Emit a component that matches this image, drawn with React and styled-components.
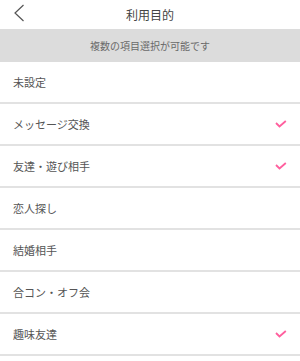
import React, { useState } from "react";
import styled, { createGlobalStyle } from "styled-components";

const GlobalStyle = createGlobalStyle`
  body {
    margin: 0;
    background: #fff;
    font-family: "Noto Sans CJK JP", "Noto Sans", sans-serif;
  }
`;

const purposes = [
  { label: "未設定", checked: false },
  { label: "メッセージ交換", checked: true },
  { label: "友達・遊び相手", checked: true },
  { label: "恋人探し", checked: false },
  { label: "結婚相手", checked: false },
  { label: "合コン・オフ会", checked: false },
  { label: "趣味友達", checked: true },
];

function App() {
  const [items, setItems] = useState(purposes);

  const toggle = (i) =>
    setItems(items.map((it, n) => (n === i ? { ...it, checked: !it.checked } : it)));

  return (
    <Screen>
      <GlobalStyle />
      <Header>
        <BackButton aria-label="戻る">
          <svg width="12" height="18" viewBox="0 0 12 18">
            <path d="M10.5 1 L2 9 L10.5 17" fill="none" stroke="#555" strokeWidth="1.2" />
          </svg>
        </BackButton>
        <Title>利用目的</Title>
      </Header>
      <Notice>複数の項目選択が可能です</Notice>
      <List>
        {items.map((it, i) => (
          <Row key={it.label} onClick={() => toggle(i)}>
            <Label>{it.label}</Label>
            {it.checked && (
              <svg width="12" height="8" viewBox="0 0 12 8">
                <path d="M1 3 L4.5 6.5 L10.8 1" fill="none" stroke="#ff5f9e" strokeWidth="1.8" />
              </svg>
            )}
          </Row>
        ))}
      </List>
    </Screen>
  );
}

const Screen = styled.div`
  width: 300px;
  min-height: 361px;
  background: #fff;
`;

const Header = styled.header`
  height: 29px;
  display: flex;
  align-items: center;
  justify-content: center;
  position: relative;
`;

const BackButton = styled.button`
  position: absolute;
  left: 13px;
  top: 4px;
  padding: 0;
  border: none;
  background: none;
  display: flex;
`;

const Title = styled.h1`
  margin: 0;
  font-size: 12px;
  font-weight: 400;
  color: #444;
`;

const Notice = styled.div`
  height: 33px;
  display: flex;
  align-items: center;
  justify-content: center;
  background: #dcdcdc;
  font-size: 10px;
  color: #6a6a6a;
`;

const List = styled.ul`
  margin: 0;
  padding: 0;
  list-style: none;
`;

const Row = styled.li`
  height: 40px;
  padding: 0 13px 0 13px;
  display: flex;
  align-items: center;
  justify-content: space-between;
  border-bottom: 2px solid #e2e2e2;
  cursor: pointer;
`;

const Label = styled.span`
  font-size: 11px;
  color: #555;
`;

export default App;
